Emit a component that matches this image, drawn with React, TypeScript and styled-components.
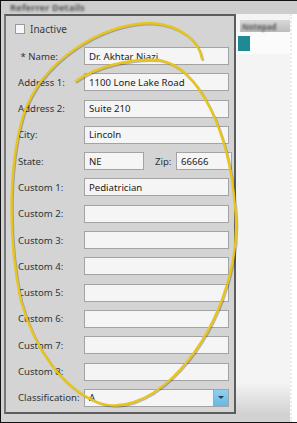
import React, { FC, ReactElement } from 'react'
import styled, { createGlobalStyle } from 'styled-components'

const GlobalStyle = createGlobalStyle`
  html, body {
    margin: 0;
    padding: 0;
    background: #fff;
  }
  body {
    font-family: 'Noto Sans', 'Open Sans', sans-serif;
  }
`

const Frame = styled.div`
  position: relative;
  width: 297px;
  height: 423px;
  box-sizing: border-box;
  border: 1px solid #111;
  border-right: none;
  background: #d2d2d2;
  overflow: hidden;
  display: flex;
  flex-direction: column;
`

const TitleBar = styled.div`
  height: 13px;
  flex: none;
  padding-left: 9px;
  display: flex;
  align-items: center;
  background: #cdcdcd;
`

const BlurText = styled.span<{ $size?: number }>`
  font-family: 'Noto Sans', sans-serif;
  font-size: ${(p) => p.$size ?? 9.5}px;
  font-weight: 700;
  color: #5a5a5a;
  filter: blur(0.9px);
`

const Body = styled.div`
  flex: 1;
  display: flex;
  padding-left: 3px;
  min-height: 0;
`

const Panel = styled.section`
  width: 232px;
  height: 400px;
  box-sizing: border-box;
  border: 2px solid #5c5c5c;
  border-left-color: #777;
  background: #d4d4d4;
  padding: 6px 0 0 9px;
  display: flex;
  flex-direction: column;
`

const CheckRow = styled.label`
  display: flex;
  align-items: center;
  gap: 5px;
  height: 11px;
  margin-top: 1px;
  font-size: 10px;
  color: #3a3a3a;
`

const CheckBox = styled.span`
  width: 8px;
  height: 8px;
  border: 1px solid #9a9a9a;
  background: #f7f7f7;
`

const Form = styled.div`
  display: flex;
  flex-direction: column;
  gap: 8.3px;
  margin-top: 13px;
  padding-left: 3px;
`

const Row = styled.div`
  display: flex;
  align-items: center;
  height: 18px;
`

const Label = styled.span<{ $w?: number }>`
  width: ${(p) => p.$w ?? 66}px;
  flex: none;
  font-size: 9.6px;
  color: #333;
  white-space: nowrap;
`

const Field = styled.div<{ $w?: number }>`
  width: ${(p) => p.$w ?? 145}px;
  height: 18px;
  box-sizing: border-box;
  border: 1px solid #a3a3a3;
  background: #f5f5f5;
  font-size: 9.6px;
  color: #1b1b1b;
  padding-left: 4px;
  display: flex;
  align-items: center;
  flex: none;
`

const ZipLabel = styled.span`
  font-size: 9.6px;
  color: #333;
  margin-left: 11px;
  width: 21px;
`

const Select = styled(Field)`
  padding-right: 0;
  justify-content: space-between;
`

const DropButton = styled.span`
  width: 14px;
  height: 16px;
  background: linear-gradient(#8fd0f2, #66b7e6);
  border-left: 1px solid #8bb0c8;
  display: flex;
  align-items: center;
  justify-content: center;
  &::after {
    content: '';
    border-left: 3px solid transparent;
    border-right: 3px solid transparent;
    border-top: 3px solid #2d3e4c;
  }
`

const Side = styled.aside`
  flex: 1;
  display: flex;
  flex-direction: column;
  height: 400px;
  background: linear-gradient(#f4f4f4 92%, #d2d2d2);
  padding-top: 6px;
  box-sizing: border-box;
`

const SideHeader = styled.div`
  height: 12px;
  margin-left: 4px;
  background: linear-gradient(#d8d8d8, #bdbdbd);
  display: flex;
  align-items: center;
  padding-left: 2px;
`

const SideList = styled.div`
  height: 22px;
  background: #fbfbfb;
  padding: 4px 0 0 2px;
  box-sizing: border-box;
`

const TealChip = styled.span`
  display: block;
  width: 12px;
  height: 15px;
  background: #1e8a98;
  filter: blur(0.6px);
`

const TornEdge = styled.div`
  width: 5px;
  flex: none;
  background: #fff;
  border-left: 2px dotted #e9e9e9;
`

const Annotation = styled.svg`
  position: absolute;
  left: 0;
  top: 0;
  pointer-events: none;
  filter: drop-shadow(1px 1px 0.6px rgba(0, 0, 0, 0.25));
`

const customs = [1, 2, 3, 4, 5, 6, 7, 8]
const values: Record<number, string> = { 1: 'Pediatrician' }

const App: FC = (): ReactElement => {
  return (
    <>
      <GlobalStyle />
      <Frame>
        <TitleBar>
          <BlurText>Referrer Details</BlurText>
        </TitleBar>
        <Body>
          <Panel>
            <CheckRow>
              <CheckBox />
              Inactive
            </CheckRow>
            <Form>
              <Row>
                <Label>&nbsp;* Name:</Label>
                <Field>Dr. Akhtar Niazi</Field>
              </Row>
              <Row>
                <Label>Address 1:</Label>
                <Field>1100 Lone Lake Road</Field>
              </Row>
              <Row>
                <Label>Address 2:</Label>
                <Field>Suite 210</Field>
              </Row>
              <Row>
                <Label>City:</Label>
                <Field>Lincoln</Field>
              </Row>
              <Row>
                <Label>State:</Label>
                <Field $w={60}>NE</Field>
                <ZipLabel>Zip:</ZipLabel>
                <Field $w={56}>66666</Field>
              </Row>
              {customs.map((n) => (
                <Row key={n}>
                  <Label>Custom {n}:</Label>
                  <Field>{values[n] ?? ''}</Field>
                </Row>
              ))}
              <Row>
                <Label>Classification:</Label>
                <Select>
                  A
                  <DropButton />
                </Select>
              </Row>
            </Form>
          </Panel>
          <Side>
            <SideHeader>
              <BlurText $size={8}>Notepad</BlurText>
            </SideHeader>
            <SideList>
              <TealChip />
            </SideList>
          </Side>
          <TornEdge />
        </Body>
        <Annotation width="297" height="423" viewBox="0 0 297 423">
          <path
            d="M75,80 C95,66 128,57 158,59 C198,66 228,130 234,205 C241,265 214,335 172,376 C146,401 118,410 96,401 C62,387 34,350 20,300 C8,245 6,170 22,115 C40,60 100,22 150,22 C180,24 198,40 201,58"
            fill="none"
            stroke="#e8c51c"
            strokeWidth="2.4"
            strokeLinecap="round"
          />
        </Annotation>
      </Frame>
    </>
  )
}

export default App
